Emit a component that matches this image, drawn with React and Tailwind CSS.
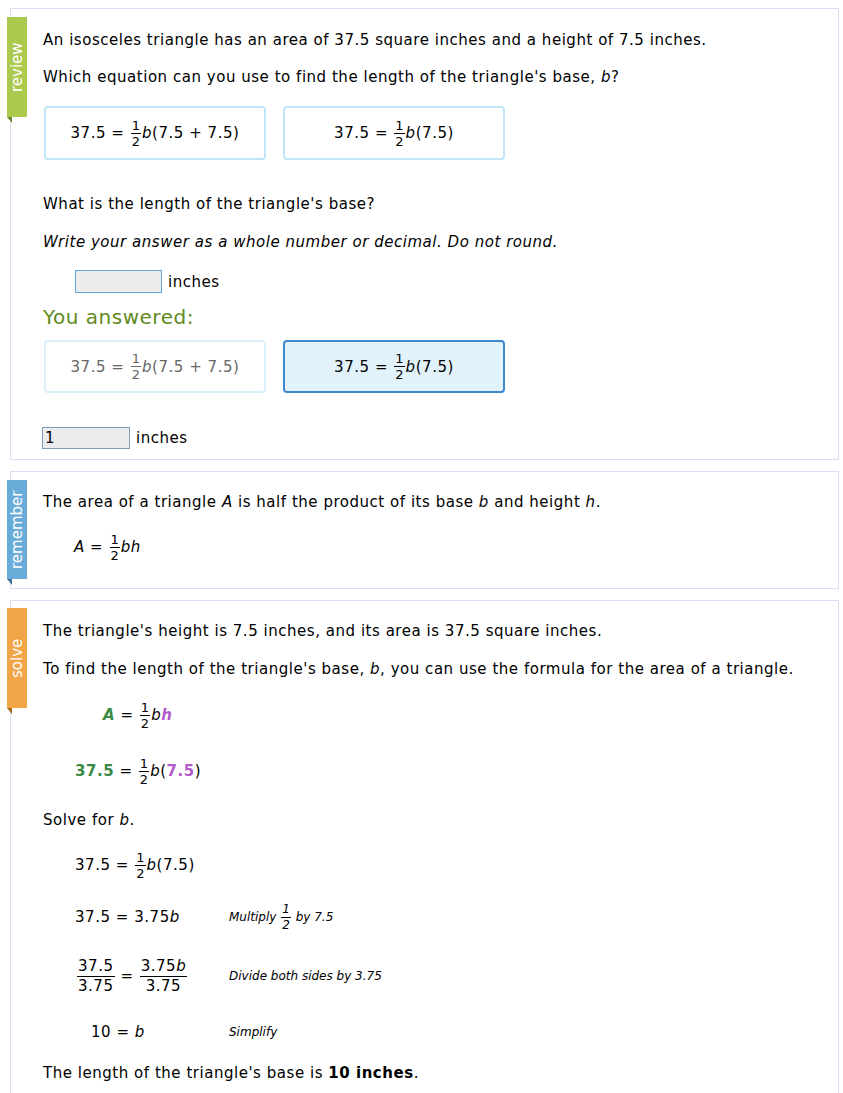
import React from "react";

const FONT = { fontFamily: '"DejaVu Sans", Verdana, sans-serif' };

function Frac({ n, d, size = "text-[13px]" }) {
  return (
    <span className={`inline-flex flex-col items-center align-middle ${size} leading-[13px] mx-[1px] tracking-normal`}>
      <span className="border-b border-current px-[1px] pb-[1px]">{n}</span>
      <span className="px-[1px] pt-[1px]">{d}</span>
    </span>
  );
}

function BigFrac({ n, d }) {
  return (
    <span className="inline-flex flex-col items-center align-middle leading-[17px]">
      <span className="border-b border-black px-[1px] pb-[1px]">{n}</span>
      <span className="px-[1px] pt-[1px]">{d}</span>
    </span>
  );
}

function Tab({ label, color, fold, top = "top-[8px]", h = "h-[100px]" }) {
  return (
    <div className={`absolute left-[-4px] ${top} ${h} w-[20px]`}>
      <div
        className="w-full h-full flex items-center justify-center text-white text-[15px] tracking-normal [writing-mode:vertical-rl] rotate-180"
        style={{ backgroundColor: color }}
      >
        {label}
      </div>
      <svg className="absolute left-0 top-full" width="5" height="6" viewBox="0 0 5 6">
        <polygon points="0,0 5,0 5,6" fill={fold} />
      </svg>
    </div>
  );
}

function Card({ children, className = "" }) {
  return (
    <div className={`relative border border-[#dcdcf2] bg-white pl-[32px] ${className}`}>{children}</div>
  );
}

function Eq1() {
  return (
    <span className="inline-flex items-center">
      37.5 =&nbsp;<Frac n="1" d="2" />
      <i>b</i>(7.5 + 7.5)
    </span>
  );
}
function Eq2() {
  return (
    <span className="inline-flex items-center">
      37.5 =&nbsp;<Frac n="1" d="2" />
      <i>b</i>(7.5)
    </span>
  );
}

export default function App() {
  return (
    <div className="bg-white text-black text-[15px] leading-[18px] tracking-[0.53px] pl-[10px] pr-[4px] pt-[8px] flex flex-col gap-[11px]" style={FONT}>
      {/* Review card */}
      <Card className="pt-[22px] pb-[10px]">
        <Tab label="review" color="#abc94d" fold="#6f8a2c" top="top-[8px]" h="h-[100px]" />
        <p>An isosceles triangle has an area of 37.5 square inches and a height of 7.5 inches.</p>
        <p className="mt-[19px]">
          Which equation can you use to find the length of the triangle's base, <i>b</i>?
        </p>
        <div className="mt-[20px] flex gap-[17px]">
          <div className="w-[222px] h-[54px] ml-[1px] rounded-[4px] border-2 border-[#bfe5f6] flex items-center justify-center">
            <Eq1 />
          </div>
          <div className="w-[222px] h-[54px] rounded-[4px] border-2 border-[#bfe5f6] flex items-center justify-center">
            <Eq2 />
          </div>
        </div>
        <p className="mt-[35px]">What is the length of the triangle's base?</p>
        <p className="mt-[20px] italic">Write your answer as a whole number or decimal. Do not round.</p>
        <div className="mt-[19px] ml-[32px] flex items-center gap-[6px]">
          <div className="w-[87px] h-[23px] bg-[#ebeceb] border border-[#64a6de]" />
          <span>inches</span>
        </div>
        <p className="mt-[12px] text-[20px] leading-[24px] tracking-[0.5px] text-[#5f8a22]">You answered:</p>
        <div className="mt-[11px] flex gap-[17px]">
          <div className="w-[222px] h-[53px] ml-[1px] rounded-[4px] border-2 border-[#daf0fa] text-[#666] flex items-center justify-center">
            <Eq1 />
          </div>
          <div className="w-[222px] h-[53px] rounded-[4px] border-2 border-[#3f88c9] bg-[#e1f2fb] flex items-center justify-center">
            <Eq2 />
          </div>
        </div>
        <div className="mt-[34px] -ml-[1px] flex items-center gap-[6px]">
          <div className="w-[88px] h-[22px] bg-[#ebeceb] border border-[#7d9cb8] flex items-center pl-[2px] leading-[16px]">
            1
          </div>
          <span>inches</span>
        </div>
      </Card>

      {/* Remember card */}
      <Card className="pt-[21px] pb-[26px]">
        <Tab label="remember" color="#69acd9" fold="#3d6f93" top="top-[8px]" h="h-[99px]" />
        <p>
          The area of a triangle <i>A</i> is half the product of its base <i>b</i> and height <i>h</i>.
        </p>
        <div className="mt-[21px] ml-[31px] h-[30px] flex items-center">
          <i>A</i>&nbsp;=&nbsp;<Frac n="1" d="2" />
          <i>bh</i>
        </div>
      </Card>

      {/* Solve card */}
      <Card className="pt-[21px] pb-[20px]">
        <Tab label="solve" color="#f1a546" fold="#a96a1c" top="top-[7px]" h="h-[100px]" />
        <p>The triangle's height is 7.5 inches, and its area is 37.5 square inches.</p>
        <p className="mt-[20px]">
          To find the length of the triangle's base, <i>b</i>, you can use the formula for the area of a triangle.
        </p>
        <div className="mt-[22px] ml-[60px] h-[30px] flex items-center">
          <b className="italic text-[#3a8a45]">A</b>&nbsp;=&nbsp;<Frac n="1" d="2" />
          <i>b</i>
          <b className="italic text-[#b35bcc]">h</b>
        </div>
        <div className="mt-[26px] ml-[32px] h-[30px] flex items-center">
          <b className="text-[#3a8a45]">37.5</b>&nbsp;=&nbsp;<Frac n="1" d="2" />
          <i>b</i>(<b className="text-[#b35bcc]">7.5</b>)
        </div>
        <p className="mt-[25px]">
          Solve for <i>b</i>.
        </p>

        <div className="mt-[21px] ml-[32px] flex flex-col">
          <div className="h-[30px] flex items-center">
            <span>37.5 =&nbsp;</span>
            <Frac n="1" d="2" />
            <i>b</i>(7.5)
          </div>
          <div className="mt-[22px] h-[30px] flex items-center">
            <span className="w-[154px]">
              37.5 = 3.75<i>b</i>
            </span>
            <span className="italic text-[12px] tracking-normal inline-flex items-center">
              Multiply&nbsp;<Frac n="1" d="2" size="text-[12px]" />&nbsp;by 7.5
            </span>
          </div>
          <div className="mt-[26px] h-[36px] flex items-center">
            <span className="w-[154px] pl-[2px] inline-flex items-center">
              <BigFrac n="37.5" d="3.75" />
              <span className="mx-[6px]">=</span>
              <BigFrac
                n={
                  <>
                    3.75<i>b</i>
                  </>
                }
                d="3.75"
              />
            </span>
            <span className="italic text-[12px] tracking-normal">Divide both sides by 3.75</span>
          </div>
          <div className="mt-[23px] h-[30px] flex items-center">
            <span className="w-[154px] pl-[16px]">
              10 = <i>b</i>
            </span>
            <span className="italic text-[12px] tracking-normal">Simplify</span>
          </div>
        </div>
        <p className="mt-[17px]">
          The length of the triangle's base is <b>10 inches</b>.
        </p>
      </Card>
    </div>
  );
}
